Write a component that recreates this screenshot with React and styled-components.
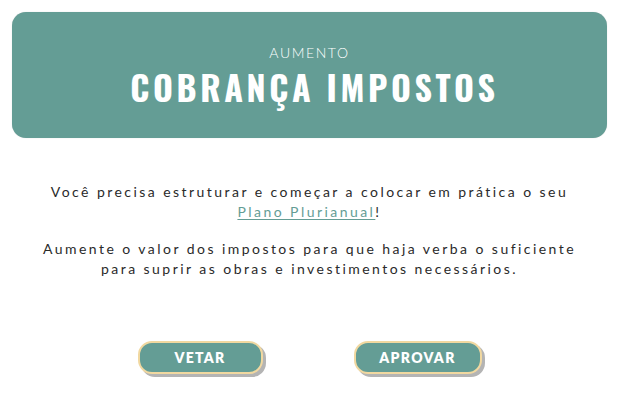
import React from 'react'
import styled, { createGlobalStyle } from 'styled-components'

const teal = '#649d95'

const GlobalStyle = createGlobalStyle`
  body {
    margin: 0;
    background: #fff;
    font-family: "Lato", "Open Sans", sans-serif;
  }
`

const SCPage = styled.div`
  width: 620px;
  height: 400px;
  padding: 12px 13px 0 12px;
  box-sizing: border-box;
  display: flex;
  flex-direction: column;
`

const SCHeader = styled.header`
  height: 126px;
  background: ${teal};
  border-radius: 14px;
  display: flex;
  flex-direction: column;
  align-items: center;
  justify-content: center;
  color: #fff;
  box-shadow: 0 0 1px rgba(0, 0, 0, 0.2);
`

const SCKicker = styled.div`
  font-family: "Lato", sans-serif;
  font-weight: 300;
  font-size: 14px;
  letter-spacing: 1.6px;
  margin-bottom: 6px;
`

const SCTitle = styled.h1`
  margin: 0;
  padding-left: 10px;
  font-family: "Oswald", "Liberation Sans Narrow", "DejaVu Sans Condensed", sans-serif;
  font-stretch: condensed;
  font-weight: 700;
  font-size: 34px;
  line-height: 40px;
  letter-spacing: 3.6px;
`

const SCBody = styled.div`
  margin-top: 44px;
  text-align: center;
  font-family: "Lato", sans-serif;
  font-size: 14px;
  line-height: 20px;
  letter-spacing: 2.45px;
  color: #2a2a2a;
`

const SCParagraph = styled.p`
  margin: 0 0 17px;
`

const SCLink = styled.a`
  color: ${teal};
  text-decoration: underline;
  text-underline-offset: 2px;
`

const SCActions = styled.div`
  margin-top: 45px;
  display: flex;
  justify-content: center;
  gap: 91px;
`

const SCButton = styled.button`
  width: ${props => props.$width}px;
  height: 33px;
  background: ${teal};
  border: 2px solid #f1d8a0;
  border-radius: 14px;
  box-shadow: 3px 3px 0 #b4b4b4;
  color: #fff;
  font-family: "Lato", sans-serif;
  font-weight: 800;
  font-size: 14px;
  letter-spacing: 1.3px;
  cursor: pointer;
`

export default function App () {
  return (
    <SCPage>
      <GlobalStyle />
      <SCHeader>
        <SCKicker>AUMENTO</SCKicker>
        <SCTitle>COBRANÇA IMPOSTOS</SCTitle>
      </SCHeader>
      <SCBody>
        <SCParagraph>
          Você precisa estruturar e começar a colocar em prática o seu<br />
          <SCLink href="#">Plano Plurianual</SCLink>!
        </SCParagraph>
        <SCParagraph>
          Aumente o valor dos impostos para que haja verba o suficiente<br />
          para suprir as obras e investimentos necessários.
        </SCParagraph>
      </SCBody>
      <SCActions>
        <SCButton $width={125}>VETAR</SCButton>
        <SCButton $width={128}>APROVAR</SCButton>
      </SCActions>
    </SCPage>
  )
}
